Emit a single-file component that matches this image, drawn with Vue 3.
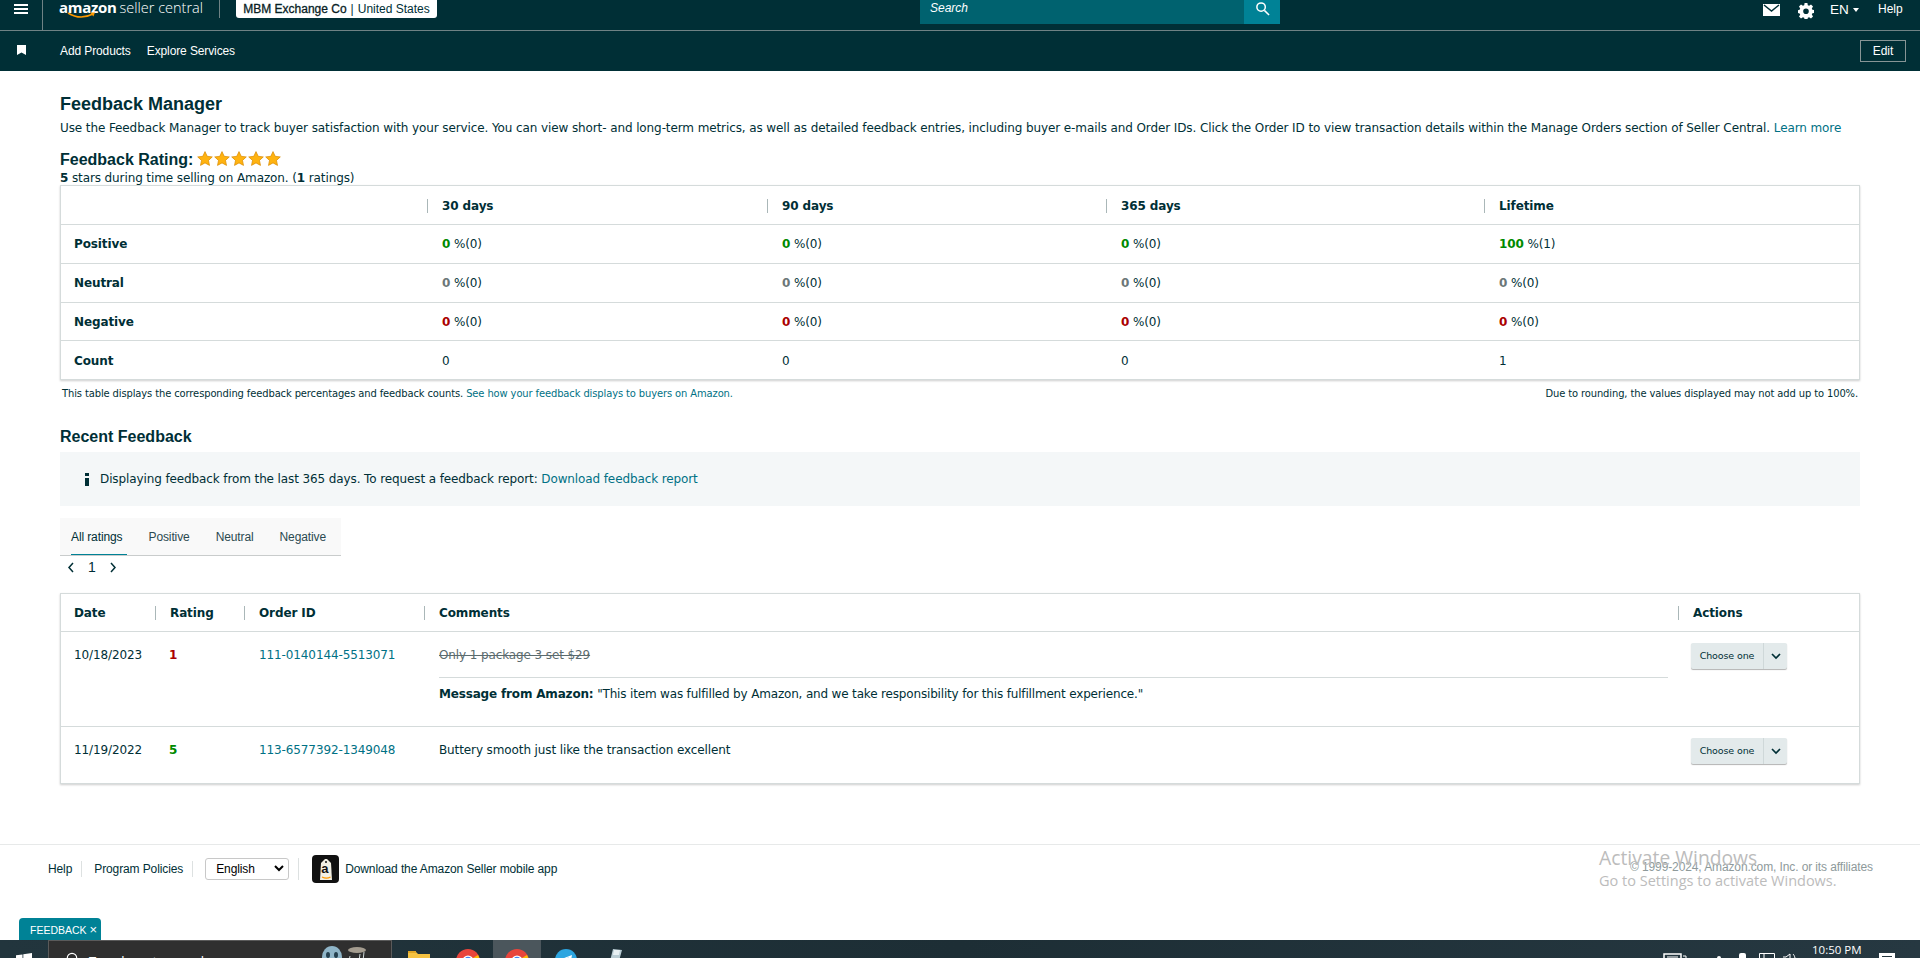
<template>
  <div class="page">
    <header class="topbar">
      <button class="burger"><span></span><span></span><span></span></button>
      <div class="logo">
        <span class="logo-amazon">amazon</span><span class="logo-rest">seller central</span>
        <svg class="smile" width="30" height="7" viewBox="0 0 30 7">
          <path d="M1 1c8 5 17 5 25 1" fill="none" stroke="#f90" stroke-width="1.6" />
          <path d="M23 0.6l5 0-1.6 4z" fill="#f90" />
        </svg>
      </div>
      <div class="account">
        <b>MBM Exchange Co</b><i>|</i><span>United States</span>
      </div>
      <div class="search">
        <span class="search-text">Search</span>
        <span class="search-btn">
          <svg width="15" height="15" viewBox="0 0 16 16" fill="none" stroke="#fff" stroke-width="1.6">
            <circle cx="6.5" cy="6.5" r="4.5" />
            <path d="M10 10l5 5" />
          </svg>
        </span>
      </div>
      <div class="top-right">
        <svg class="mail" width="17" height="12" viewBox="0 0 17 12">
          <path d="M0 0h17v12H0z" fill="#fff" />
          <path d="M1 1l7.5 6L16 1" fill="none" stroke="#002f36" stroke-width="1.5" />
        </svg>
        <svg class="gear" width="16" height="16" viewBox="0 0 16 16">
          <path fill="#fff" fill-rule="evenodd" d="M6.6 0h2.8l.4 2.2 1.3.6L13 1.6l2 2-1.2 1.9.6 1.3 2.200.4v2.600l-2.200.4-.6 1.300 1.200 1.900-2 2-1.900-1.200-1.300.6-.4 2.200H6.600l-.4-2.200-1.300-.6L3 15.600l-2-2 1.200-1.900-.6-1.300L0 10V7.200l1.600-.4.6-1.300L1 3.600l2-2 1.900 1.200 1.300-.6zM8 5.400a2.800 2.800 0 1 0 0 5.600 2.800 2.800 0 0 0 0-5.600z" />
        </svg>
        <span class="lang">EN<em></em></span>
        <span class="help">Help</span>
      </div>
    </header>

    <nav class="subnav">
      <svg class="bookmark" width="9" height="10" viewBox="0 0 9 10"><path d="M0 0h9v10L4.500 7.500 0 10z" fill="#fff" /></svg>
      <a>Add Products</a>
      <a>Explore Services</a>
      <button class="edit">Edit</button>
    </nav>

    <main class="content">
      <h1>Feedback Manager</h1>
      <p class="intro">
        Use the Feedback Manager to track buyer satisfaction with your service. You can view short- and long-term metrics, as well as detailed feedback entries, including buyer e-mails and Order IDs. Click the Order ID to view transaction details within the Manage Orders section of Seller Central.
        <a>Learn more</a>
      </p>
      <div class="rating-title">
        <h2>Feedback Rating:</h2>
        <svg v-for="n in 5" :key="n" width="16" height="15" viewBox="0 0 16 15">
          <path d="M8 .6l2.200 4.700 5.100.6-3.800 3.500 1 5L8 11.900 3.500 14.400l1-5L.7 5.900l5.100-.6z" fill="#ffb310" stroke="#d98a00" stroke-width=".7" />
        </svg>
      </div>
      <p class="rating-sub"><b>5</b> stars during time selling on Amazon. (<b>1</b> ratings)</p>

      <section class="card metrics">
        <div class="metrics-row head">
          <div></div>
          <div v-for="p in periods" :key="p" class="th"><span>{{ p }}</span></div>
        </div>
        <div v-for="row in metrics" :key="row.label" class="metrics-row">
          <div class="row-label">{{ row.label }}</div>
          <div v-for="(cell, i) in row.cells" :key="i" class="cell">
            <template v-if="row.tone">
              <b :class="row.tone">{{ cell[0] }}</b> %({{ cell[1] }})
            </template>
            <template v-else>{{ cell }}</template>
          </div>
        </div>
      </section>
      <div class="table-note">
        <span>This table displays the corresponding feedback percentages and feedback counts. <a>See how your feedback displays to buyers on Amazon.</a></span>
        <span>Due to rounding, the values displayed may not add up to 100%.</span>
      </div>

      <h2 class="recent">Recent Feedback</h2>
      <div class="info">
        <svg width="4" height="13" viewBox="0 0 4 13"><path d="M0 0h4v3H0zM0 5h4v8H0z" fill="#002f36" /></svg>
        <span>Displaying feedback from the last 365 days. To request a feedback report: <a>Download feedback report</a></span>
      </div>

      <div class="tabs">
        <span v-for="(t, i) in tabs" :key="t" class="tab" :class="{ active: i === 0 }">{{ t }}</span>
      </div>
      <div class="pager">
        <svg width="8" height="11" viewBox="0 0 8 11"><path d="M6 1L2 5.500 6 10" fill="none" stroke="#002f36" stroke-width="1.500" /></svg>
        <span>1</span>
        <svg width="8" height="11" viewBox="0 0 8 11"><path d="M2 1l4 4.500L2 10" fill="none" stroke="#002f36" stroke-width="1.500" /></svg>
      </div>

      <section class="card feedback">
        <div class="fb-row head">
          <div class="th first"><span>Date</span></div>
          <div class="th"><span>Rating</span></div>
          <div class="th"><span>Order ID</span></div>
          <div class="th"><span>Comments</span></div>
          <div class="th"><span>Actions</span></div>
        </div>
        <div v-for="f in feedback" :key="f.order" class="fb-row" :class="f.cls">
          <div class="date">{{ f.date }}</div>
          <div class="score" :class="f.tone">{{ f.score }}</div>
          <div><a>{{ f.order }}</a></div>
          <div class="comment">
            <div :class="{ struck: f.message }">{{ f.comment }}</div>
            <div v-if="f.message" class="amazon-msg"><b>Message from Amazon:</b> "{{ f.message }}"</div>
          </div>
          <div class="action">
            <div class="choose">
              <span>Choose one</span>
              <span class="choose-arrow">
                <svg width="10" height="7" viewBox="0 0 10 7"><path d="M1 1l4 4 4-4" fill="none" stroke="#002f36" stroke-width="1.700" /></svg>
              </span>
            </div>
          </div>
        </div>
      </section>
    </main>

    <footer class="footer">
      <a>Help</a>
      <i class="sep"></i>
      <a>Program Policies</a>
      <i class="sep"></i>
      <div class="lang-select">
        <span>English</span>
        <svg width="10" height="7" viewBox="0 0 10 7"><path d="M1 1l4 4 4-4" fill="none" stroke="#000" stroke-width="2" /></svg>
      </div>
      <i class="sep tall"></i>
      <div class="app-icon">
        <svg width="27" height="28" viewBox="0 0 27 28">
          <rect width="27" height="28" rx="4" fill="#111" />
          <path d="M9 8l4-4h2l4 4 1 17-12 0z" fill="#f3f0e4" />
          <circle cx="14" cy="7" r="1" fill="#111" />
          <path d="M10 22c3 1.500 6 1.500 8.500 0" fill="none" stroke="#f90" stroke-width="1.200" />
        </svg>
        <span class="app-letter">a</span>
      </div>
      <a class="app-link">Download the Amazon Seller mobile app</a>
      <span class="copyright">© 1999-2024, Amazon.com, Inc. or its affiliates</span>
    </footer>

    <div class="watermark">
      <div class="wm-1">Activate Windows</div>
      <div class="wm-2">Go to Settings to activate Windows.</div>
    </div>

    <div class="feedback-tab">FEEDBACK <span>×</span></div>

    <div class="taskbar">
      <div class="win">
        <svg width="16" height="16" viewBox="0 0 16 16"><path d="M0 2.300l6.500-.9v6.200H0zM7.300 1.300L16 0v7.600H7.300zM0 8.400h6.500v6.200L0 13.700zM7.300 8.400H16V16l-8.700-1.300z" fill="#fff" /></svg>
      </div>
      <div class="task-search">
        <svg width="12" height="12" viewBox="0 0 12 12"><circle cx="6" cy="6" r="4.700" fill="none" stroke="#fff" stroke-width="1.200" /></svg>
        <span>Type here to search</span>
        <div class="alien">
          <svg width="46" height="18" viewBox="0 0 46 18">
            <ellipse cx="11" cy="14" rx="10" ry="11" fill="#8fb5c8" />
            <ellipse cx="7" cy="12" rx="2" ry="3" fill="#25404f" />
            <ellipse cx="15" cy="12" rx="2" ry="3" fill="#25404f" />
            <ellipse cx="36" cy="7" rx="9" ry="3" fill="#a49c8f" />
            <path d="M28 18l1-5M33 18v-3M38 18l1-7M42 18l1-9" stroke="#cfd8d8" stroke-width="1" />
          </svg>
        </div>
      </div>
      <div class="task-apps">
        <span class="app"><svg width="22" height="12" viewBox="0 0 22 12"><path d="M0 1h8l2 2h12v9H0z" fill="#f5c242" /><path d="M0 0h8v2H0z" fill="#e0a526" /></svg></span>
        <span v-for="(a, i) in chromes" :key="i" class="app" :class="{ current: a }">
          <svg width="24" height="24" viewBox="0 0 24 24">
            <circle cx="12" cy="12" r="12" fill="#e8453c" />
            <path d="M12 12L2 18a12 12 0 0 0 10 6z" fill="#34a853" />
            <path d="M12 12l10-6a12 12 0 0 1-10 18z" fill="#fbbc05" />
            <circle cx="12" cy="12" r="5.500" fill="#fff" />
            <circle cx="12" cy="12" r="4.200" fill="#4285f4" />
          </svg>
        </span>
        <span class="app"><svg width="22" height="22" viewBox="0 0 22 22"><circle cx="11" cy="11" r="11" fill="#2ca5e0" /><path d="M4 11l13-5-2 11-4-3-2 2v-3l5-5-7 4z" fill="#fff" /></svg></span>
        <span class="app"><svg width="20" height="12" viewBox="0 0 20 12"><path d="M5 12l3-12 9 1-3 11z" fill="#b9ccd3" /><path d="M9 1h6l-1 5H8z" fill="#e7eff2" /></svg></span>
      </div>
      <div class="tray">
        <svg width="24" height="8" viewBox="0 0 24 8"><path d="M1 1h17v7H1z" fill="none" stroke="#fff" stroke-width="1.500" /><path d="M4 4h11" stroke="#fff" /><path d="M20 3h3v5" fill="none" stroke="#fff" /></svg>
        <span class="tray-dot"></span>
        <span class="tray-bar"></span>
        <svg width="16" height="6" viewBox="0 0 16 6"><path d="M.5 6V.5h15V6M5 .5V6" fill="none" stroke="#fff" /></svg>
        <svg width="14" height="8" viewBox="0 0 14 8"><path d="M0 4h3l4-3v7M10 1c1 1 1.500 2 2 4" fill="none" stroke="#fff" /></svg>
        <span class="clock">10:50 PM</span>
        <span class="notify"><i></i></span>
      </div>
    </div>
  </div>
</template>

<script setup>
const periods = ['30 days', '90 days', '365 days', 'Lifetime']

const metrics = [
  { label: 'Positive', tone: 'pos', cells: [[0, 0], [0, 0], [0, 0], [100, 1]] },
  { label: 'Neutral', tone: 'neu', cells: [[0, 0], [0, 0], [0, 0], [0, 0]] },
  { label: 'Negative', tone: 'neg', cells: [[0, 0], [0, 0], [0, 0], [0, 0]] },
  { label: 'Count', tone: '', cells: [0, 0, 0, 1] }
]

const tabs = ['All ratings', 'Positive', 'Neutral', 'Negative']

const feedback = [
  {
    date: '10/18/2023',
    score: 1,
    tone: 'neg',
    order: '111-0140144-5513071',
    comment: 'Only 1 package 3 set $29',
    message: 'This item was fulfilled by Amazon, and we take responsibility for this fulfillment experience.',
    cls: 'tall'
  },
  {
    date: '11/19/2022',
    score: 5,
    tone: 'pos',
    order: '113-6577392-1349048',
    comment: 'Buttery smooth just like the transaction excellent',
    message: '',
    cls: 'last'
  }
]

const chromes = [false, true]
</script>

<style>
html,
body {
  margin: 0;
  background: #fff;
}
</style>

<style scoped>
.page {
  position: relative;
  width: 1920px;
  height: 958px;
  overflow: hidden;
  display: flex;
  flex-direction: column;
  font-family: "DejaVu Sans", sans-serif;
  font-size: 12px;
  letter-spacing: -0.11px;
  color: #002f36;
}

a {
  color: #007185;
}

/* top nav */
.topbar {
  height: 30px;
  flex: none;
  display: flex;
  align-items: flex-start;
  background: #002f36;
  border-bottom: 1px solid #6f8285;
  font-family: "Liberation Sans", sans-serif;
  color: #fff;
  letter-spacing: 0;
}

.burger {
  width: 43px;
  height: 30px;
  flex: none;
  padding: 4px 14px 0;
  background: none;
  border: 0;
  border-right: 1px solid #6f8285;
  display: flex;
  flex-direction: column;
  gap: 2px;
  box-sizing: border-box;
}

.burger span {
  display: block;
  height: 2px;
  width: 14px;
  background: #fff;
}

.logo {
  position: relative;
  width: 160px;
  margin-left: 16px;
  height: 18px;
  border-right: 1px solid #6f8285;
  box-sizing: content-box;
  line-height: 15px;
  white-space: nowrap;
}

.logo-amazon {
  font-family: "Open Sans", sans-serif;
  font-weight: 700;
  font-size: 15px;
  letter-spacing: -0.3px;
}

.logo-rest {
  font-family: "Open Sans", sans-serif;
  font-weight: 300;
  font-size: 14.500px;
  margin-left: 3px;
}

.smile {
  position: absolute;
  left: 8px;
  top: 12px;
}

.account {
  height: 18px;
  width: 201px;
  box-sizing: border-box;
  margin-left: 16px;
  background: #fff;
  color: #002f36;
  border-radius: 0 0 3px 3px;
  font-size: 12px;
  line-height: 18px;
  text-align: center;
  white-space: nowrap;
}

.account b {
  font-weight: 400;
  -webkit-text-stroke: 0.3px #002f36;
  color: #111;
}

.account i {
  font-style: normal;
  margin: 0 4px;
}

.search {
  margin-left: 483px;
  width: 360px;
  height: 24px;
  display: flex;
  background: #00626f;
}

.search-text {
  flex: 1;
  padding-left: 10px;
  font-style: italic;
  font-size: 12px;
  line-height: 17px;
}

.search-btn {
  width: 36px;
  background: #008296;
  display: flex;
  justify-content: center;
  padding-top: 1px;
}

.top-right {
  margin-left: 483px;
  display: flex;
  align-items: flex-start;
  padding-top: 3px;
  font-size: 12px;
  line-height: 13px;
}

.mail {
  margin-top: 1px;
}

.gear {
  margin-left: 18px;
}

.lang {
  margin-left: 16px;
  width: 48px;
  font-size: 13.500px;
}

.lang em {
  display: inline-block;
  margin-left: 4px;
  vertical-align: 2px;
  border: 3px solid transparent;
  border-top: 4px solid #fff;
  border-bottom: 0;
}

.subnav {
  height: 40px;
  flex: none;
  display: flex;
  align-items: center;
  background: #002f36;
  font-family: "Liberation Sans", sans-serif;
  color: #fff;
  padding-left: 17px;
}

.subnav a {
  color: #fff;
  font-size: 12px;
  margin-right: 16px;
}

.bookmark {
  margin-right: 34px;
  margin-top: -3px;
}

.edit {
  margin-left: auto;
  margin-right: 14px;
  width: 46px;
  height: 22px;
  padding: 0;
  background: transparent;
  border: 1px solid #879596;
  color: #fff;
  font: 12px "Liberation Sans", sans-serif;
}

/* content */
.content {
  padding: 23px 60px 0;
  flex: none;
}

h1 {
  margin: 0;
  font: 700 18px/20px "Liberation Sans", sans-serif;
  letter-spacing: 0;
  color: #002f36;
}

.intro {
  margin: 4px 0 0;
  line-height: 20px;
  letter-spacing: -0.103px;
  white-space: nowrap;
}

.rating-title {
  display: flex;
  align-items: center;
  margin-top: 10px;
  height: 24px;
}

.rating-title h2,
.recent {
  margin: 0;
  font: 700 16px/20px "Liberation Sans", sans-serif;
  letter-spacing: 0;
}

.rating-title h2 {
  margin-right: 4px;
}

.rating-title svg {
  margin-top: -4px;
  margin-right: 1px;
}

.rating-sub {
  margin: 0;
  line-height: 13px;
}

.card {
  width: 1800px;
  box-sizing: border-box;
  background: #fff;
  border: 1px solid #d5dbdb;
  box-shadow: 0 1px 2px rgba(0, 0, 0, 0.2);
}

.metrics-row {
  display: grid;
  grid-template-columns: 366px 340px 339px 378px 1fr;
  align-items: center;
  height: 36.750px;
  padding-top: 1px;
  border-top: 1px solid #d5dbdb;
}

.metrics-row.head {
  border-top: 0;
  height: 37px;
}

.th {
  font-weight: 700;
  height: 14px;
  line-height: 14px;
  border-left: 1px solid #aab7b8;
  padding-left: 14px;
}

.th.first {
  border-left: 0;
}

.row-label {
  padding-left: 13px;
  font-weight: 700;
}

.cell {
  padding-left: 15px;
}

.pos {
  color: #008a00;
}

.neu {
  color: #6c7778;
}

.neg {
  color: #a00;
}

.table-note {
  display: flex;
  justify-content: space-between;
  padding: 7px 2px 0;
  font-size: 9.950px;
  line-height: 14px;
}

h2.recent {
  margin-top: 26px;
}

.info {
  margin-top: 5px;
  height: 54px;
  display: flex;
  align-items: center;
  gap: 11px;
  padding-left: 25px;
  background: #f4f7f8;
}

.tabs {
  margin-top: 12px;
  width: 281px;
  height: 38px;
  box-sizing: border-box;
  display: flex;
  padding-left: 11px;
  background: #f9f9f9;
  border-bottom: 1px solid #c9cccc;
  font-family: "Liberation Sans", sans-serif;
  white-space: nowrap;
}

.tab {
  height: 37px;
  box-sizing: border-box;
  padding: 12px 0 0;
  margin-right: 26px;
  line-height: 14px;
  color: #2b4a50;
}

.tab.active {
  color: #002f36;
  border-bottom: 1px solid #008296;
  padding-right: 5px;
  margin-right: 21px;
}

.pager {
  display: flex;
  align-items: center;
  height: 22px;
  padding-left: 7px;
  font-family: "Liberation Sans", sans-serif;
  font-size: 14px;
  gap: 13px;
}

.feedback {
  margin-top: 15px;
}

.fb-row {
  display: grid;
  grid-template-columns: 94px 89px 180px 1254px 1fr;
  border-top: 1px solid #d5dbdb;
  line-height: 14px;
}

.fb-row.head {
  border-top: 0;
  height: 37px;
  align-items: center;
}

.fb-row.head .th:first-child {
  padding-left: 13px;
}

.fb-row.tall {
  height: 94px;
}

.fb-row.last {
  height: 56px;
}

.fb-row > div:not(.th) {
  padding-top: 16px;
}

.date {
  padding-left: 13px;
}

.score {
  font-weight: 700;
  padding-left: 14px;
}

.fb-row a {
  padding-left: 15px;
}

.comment {
  padding-left: 15px;
  padding-right: 10px;
}

.struck {
  color: #5b6b6e;
  text-decoration: line-through;
}

.amazon-msg {
  margin-top: 15px;
  padding-top: 9px;
  border-top: 1px solid #d5dbdb;
  letter-spacing: -0.17px;
}

.action {
  padding-left: 13px;
}

.fb-row > div.action {
  padding-top: 11px;
}

.choose {
  width: 96px;
  height: 26px;
  display: flex;
  background: #e3eaeb;
  border-radius: 2px;
  box-shadow: 0 1px 1px rgba(0, 0, 0, 0.3);
  font-size: 9.500px;
  line-height: 26px;
}

.choose > span:first-child {
  width: 72px;
  text-align: center;
  border-right: 1px solid #cfd8d9;
}

.choose-arrow {
  flex: 1;
  display: flex;
  align-items: center;
  justify-content: center;
}

/* footer */
.footer {
  position: absolute;
  left: 0;
  right: 0;
  top: 844px;
  height: 48px;
  box-sizing: border-box;
  border-top: 1px solid #e7e9e9;
  display: flex;
  align-items: center;
  padding-left: 48px;
  font-family: "Liberation Sans", sans-serif;
  font-size: 12px;
}

.footer a {
  color: #002f36;
}

.sep {
  width: 1px;
  height: 16px;
  margin: 0 12px 0 9px;
  background: #dde1e1;
}

.sep.tall {
  height: 22px;
  margin-left: 9px;
  margin-right: 13px;
}

.lang-select {
  width: 84px;
  height: 22px;
  box-sizing: border-box;
  border: 1px solid #c8c8c8;
  border-radius: 3px;
  display: flex;
  align-items: center;
  justify-content: space-between;
  padding: 0 4px 0 10px;
  color: #000;
}

.app-icon {
  position: relative;
  width: 27px;
  height: 28px;
  margin-right: 6px;
}

.app-letter {
  position: absolute;
  left: 9px;
  top: 6px;
  font: 700 13px/16px "Liberation Sans", sans-serif;
  color: #111;
}

.copyright {
  position: absolute;
  left: 1630px;
  top: 15px;
  color: #8e9a9b;
  white-space: nowrap;
}

.watermark {
  position: absolute;
  left: 1599px;
  top: 845px;
  font-family: "Open Sans", sans-serif;
  color: #bcbcbc;
  font-weight: 400;
  letter-spacing: 0;
  pointer-events: none;
}

.wm-1 {
  font-size: 19.300px;
  line-height: 26px;
}

.wm-2 {
  font-size: 14.500px;
  line-height: 20px;
}

.feedback-tab {
  position: absolute;
  left: 19px;
  top: 918px;
  width: 82px;
  height: 22px;
  box-sizing: border-box;
  padding-left: 11px;
  background: #008296;
  border-radius: 4px 4px 0 0;
  color: #fff;
  font: 10.500px/24px "Liberation Sans", sans-serif;
  letter-spacing: 0;
  white-space: nowrap;
}

.feedback-tab span {
  font-size: 13px;
}

/* windows taskbar, cropped at the bottom of the capture */
.taskbar {
  position: absolute;
  left: 0;
  right: 0;
  top: 940px;
  height: 18px;
  overflow: hidden;
  display: flex;
  align-items: flex-start;
  background: linear-gradient(90deg, #22353d, #1d2e35 50%, #263841);
  color: #fff;
  font-family: "Open Sans", sans-serif;
  letter-spacing: 0;
}

.win {
  width: 48px;
  padding: 13px 0 0 16px;
  box-sizing: border-box;
}

.task-search {
  width: 344px;
  height: 18px;
  box-sizing: border-box;
  position: relative;
  background: #2f2f2f;
  border: 1px solid #5a5a5a;
  border-bottom: 0;
  padding: 11px 0 0 17px;
  display: flex;
  gap: 11px;
  font-size: 13px;
  line-height: 14px;
}

.task-search span {
  margin-top: 2px;
}

.alien {
  position: absolute;
  left: 272px;
  top: 2px;
}

.task-apps {
  display: flex;
}

.app {
  width: 48px;
  height: 18px;
  margin-right: 1px;
  display: flex;
  justify-content: center;
  padding-top: 9px;
  box-sizing: border-box;
}

.app:first-child {
  margin-left: 3px;
  padding-top: 11px;
}

.app.current {
  background: #4b565c;
}

.tray {
  position: absolute;
  left: 1663px;
  top: 0;
  height: 18px;
  display: flex;
  align-items: flex-start;
}

.tray > * {
  margin-top: 13px;
  flex: none;
}

.tray-dot {
  width: 4px;
  height: 4px;
  margin: 16px 0 0 30px;
  background: #fff;
  border-radius: 50%;
}

.tray-bar {
  width: 7px;
  height: 10px;
  margin: 13px 13px 0 18px;
  background: #fff;
  border-radius: 2px 2px 0 0;
}

.tray svg:nth-of-type(3) {
  margin-left: 8px;
}

.clock {
  margin: 2px 0 0 15px;
  width: 67px;
  font-size: 11.500px;
  line-height: 16px;
}

.notify {
  width: 16px;
  height: 8px;
  background: #fff;
  position: relative;
}

.notify i {
  position: absolute;
  left: 3px;
  top: 3px;
  width: 10px;
  height: 1px;
  background: #22353d;
}
</style>
